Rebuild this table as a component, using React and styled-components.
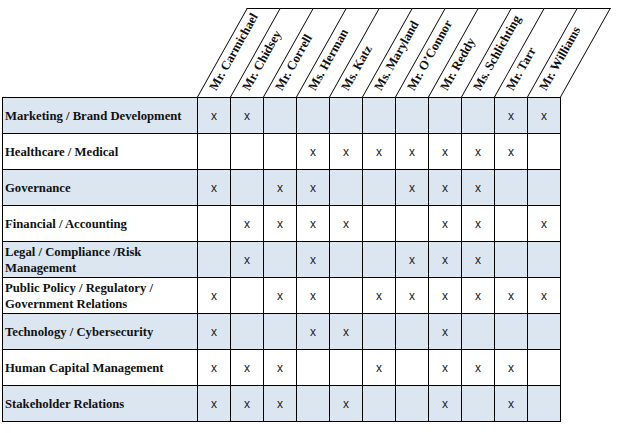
import React from 'react';
import styled, { createGlobalStyle } from 'styled-components';

const GlobalStyle = createGlobalStyle`
  body {
    margin: 0;
    background: #fff;
  }
`;

const Page = styled.div`
  padding: 8px 0 0 2px;
  font-family: 'Liberation Serif', 'Times New Roman', serif;
`;

const HeaderRow = styled.div`
  display: flex;
  height: 89px;
  padding-left: 195px;
`;

const HeadCell = styled.div`
  flex: none;
  box-sizing: border-box;
  width: ${p => (p.$last ? '34px' : '33px')};
  height: 100%;
  border-top: 1px solid #000;
  border-left: 1px solid #000;
  border-right: ${p => (p.$last ? '1px solid #000' : 'none')};
  transform-origin: 0 100%;
  transform: skewX(-29.3deg);
  display: flex;
  align-items: flex-end;
  padding-bottom: 4px;
`;

const HeadName = styled.span`
  display: block;
  white-space: nowrap;
  font-weight: bold;
  font-size: 12.7px;
  line-height: 1;
  color: #111;
  transform-origin: 0 100%;
  transform: translateX(18px) skewX(29.3deg) rotate(-60.7deg);
`;

const Grid = styled.div`
  display: grid;
  grid-template-columns: 195px repeat(11, 33px);
  grid-auto-rows: 36px;
  width: max-content;
  border-left: 1px solid #000;
  border-top: 1px solid #000;
`;

const Cell = styled.div`
  box-sizing: border-box;
  border-right: 1px solid #000;
  border-bottom: 1px solid #000;
  background: ${p => (p.$shaded ? '#dce6f1' : '#fff')};
  display: flex;
  align-items: center;
`;

const Label = styled(Cell)`
  padding-left: 2px;
  font-weight: bold;
  font-size: 12.7px;
  line-height: 16px;
  color: #111;
`;

const Mark = styled(Cell)`
  justify-content: center;
  padding-top: 1px;
  font-family: 'Liberation Sans', Arial, sans-serif;
  font-size: 12px;
  color: #222;
`;

const people = [
  'Mr. Carmichael',
  'Mr. Chidsey',
  'Mr. Correll',
  'Ms. Herman',
  'Ms. Katz',
  'Ms. Maryland',
  'Mr. O\u2019Connor',
  'Mr. Reddy',
  'Ms. Schlichting',
  'Mr. Tarr',
  'Mr. Williams',
];

// column numbers (1-based) that carry an x
const skills = [
  { name: 'Marketing / Brand Development', cols: [1, 2, 10, 11] },
  { name: 'Healthcare / Medical', cols: [4, 5, 6, 7, 8, 9, 10] },
  { name: 'Governance', cols: [1, 3, 4, 7, 8, 9] },
  { name: 'Financial / Accounting', cols: [2, 3, 4, 5, 8, 9, 11] },
  { name: 'Legal / Compliance /Risk Management', cols: [2, 4, 7, 8, 9] },
  { name: 'Public Policy / Regulatory / Government Relations', cols: [1, 3, 4, 6, 7, 8, 9, 10, 11] },
  { name: 'Technology / Cybersecurity', cols: [1, 4, 5, 8] },
  { name: 'Human Capital Management', cols: [1, 2, 3, 6, 8, 9, 10] },
  { name: 'Stakeholder Relations', cols: [1, 2, 3, 5, 8, 10] },
];

const App = () => {
  return (
    <Page>
      <GlobalStyle />
      <HeaderRow>
        {people.map((p, i) => (
          <HeadCell key={p} $last={i === people.length - 1}>
            <HeadName>{p}</HeadName>
          </HeadCell>
        ))}
      </HeaderRow>
      <Grid>
        {skills.map((s, r) => (
          <React.Fragment key={s.name}>
            <Label $shaded={r % 2 === 0}>{s.name}</Label>
            {people.map((p, c) => (
              <Mark key={p} $shaded={r % 2 === 0}>
                {s.cols.includes(c + 1) ? 'x' : ''}
              </Mark>
            ))}
          </React.Fragment>
        ))}
      </Grid>
    </Page>
  );
};

export default App;
